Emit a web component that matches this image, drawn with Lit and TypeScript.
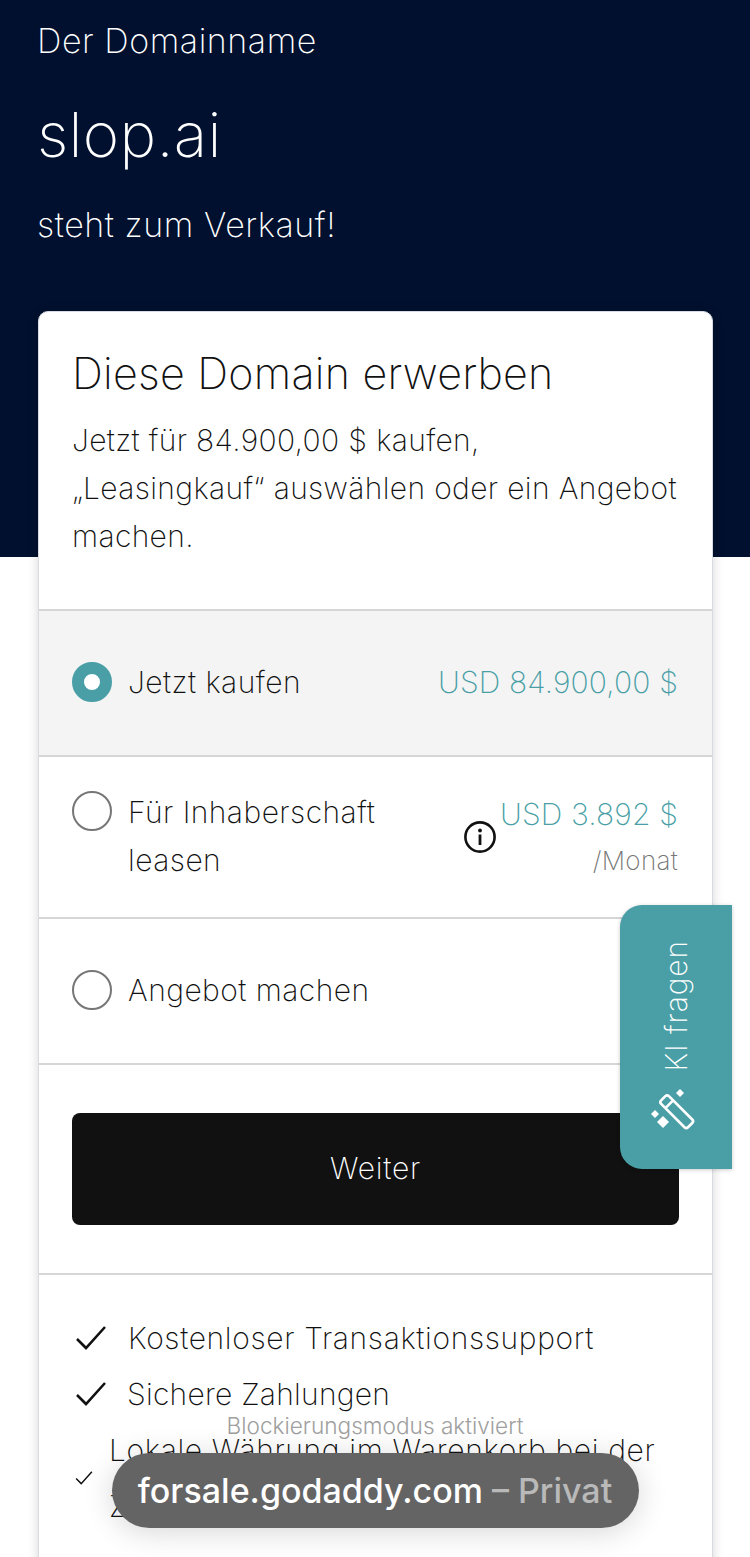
import { LitElement, css, html, svg } from 'lit'
import { customElement } from 'lit/decorators.js'

const check = (size: number) => html`
  <svg class="check" width=${size} height=${size} viewBox="0 0 32 32" fill="none" stroke="#111" stroke-width="2.6">
    <path d="M2 17 L11 26 L30 5" />
  </svg>
`

const wand = svg`
  <g fill="none" stroke="#fff" stroke-width="2.6" stroke-linejoin="round" transform="translate(24.7 21.7) rotate(-45)">
    <rect x="-5.5" y="-19" width="11" height="38" rx="2.5" />
    <path d="M-5.5 -10.5 H5.5" />
  </g>
  <g fill="#fff">
    <path d="M28 -1 L32 3 L28 7 L24 3 Z" />
    <path d="M3 20 L7 24 L3 28 L-1 24 Z" />
    <path d="M11 26 L17 32 L11 38 L5 32 Z" />
  </g>
`

@customElement('app-root')
export class AppRoot extends LitElement {
  render() {
    return html`
      <header class="hero">
        <div class="lead">Der Domainname</div>
        <h1>slop.ai</h1>
        <div class="lead sale">steht zum Verkauf!</div>
      </header>

      <main class="card">
        <section class="intro">
          <h2>Diese Domain erwerben</h2>
          <p>Jetzt für 84.900,00 $ kaufen,<br />„Leasingkauf“ auswählen oder ein Angebot machen.</p>
        </section>

        <div class="option active">
          <span class="radio on"></span>
          <span class="label">Jetzt kaufen</span>
          <span class="price">USD 84.900,00 $</span>
        </div>

        <div class="option lease">
          <span class="radio"></span>
          <span class="label">Für Inhaberschaft leasen</span>
          <svg class="info" width="34" height="34" viewBox="0 0 34 34">
            <circle cx="17" cy="17" r="14.6" fill="none" stroke="#111" stroke-width="2.6" />
            <circle cx="17" cy="10.5" r="1.9" fill="#111" />
            <rect x="15.6" y="14.5" width="2.8" height="10.5" fill="#111" />
          </svg>
          <div class="lease-price">
            <span class="price">USD 3.892 $</span>
            <span class="per">/Monat</span>
          </div>
        </div>

        <div class="option">
          <span class="radio"></span>
          <span class="label">Angebot machen</span>
        </div>

        <div class="action"><button>Weiter</button></div>

        <ul class="perks">
          <li class="wide">${check(32)}<span>Kostenloser Transaktionssupport</span></li>
          <li>${check(32)}<span>Sichere Zahlungen</span></li>
          <li class="small">${check(18)}<span>Lokale Währung im Warenkorb bei der Zahlung</span></li>
        </ul>
      </main>

      <aside class="ask">
        <span>KI fragen</span>
        <svg width="44" height="44" viewBox="0 0 44 44">${wand}</svg>
      </aside>

      <div class="browser">
        <div class="mode">Blockierungsmodus aktiviert</div>
        <div class="pill">forsale.godaddy.com<span> – Privat</span></div>
      </div>
    `
  }

  static styles = css`
    :host {
      display: block;
      position: relative;
      height: 1557px;
      overflow: hidden;
      background: #fff;
      color: #111;
      font-family: Inter, 'Noto Sans', sans-serif;
      font-weight: 200;
    }
    * {
      box-sizing: border-box;
    }
    .hero {
      height: 557px;
      padding: 19px 37px 0;
      background: #00102e;
      color: #fff;
    }
    .lead {
      font-size: 34px;
      letter-spacing: 0.55px;
      line-height: 44px;
    }
    h1 {
      margin: 36px 0 0;
      font-size: 62px;
      font-weight: 200;
      letter-spacing: 0.3px;
      line-height: 72px;
    }
    .sale {
      margin-top: 32px;
    }
    .card {
      margin: -246px 37px 0 38px;
      height: 1400px;
      background: #fff;
      border: 1px solid #d8dbe2;
      border-radius: 10px;
      box-shadow: 0 2px 12px rgba(0, 0, 0, 0.16);
    }
    .intro {
      height: 299px;
      padding: 33px 20px 0 33px;
      border-bottom: 2px solid #d6d6d6;
    }
    h2 {
      margin: 0;
      font-size: 43px;
      font-weight: 200;
      letter-spacing: 0.25px;
      line-height: 56px;
    }
    p {
      margin: 15px 0 0;
      font-size: 30px;
      letter-spacing: 0.35px;
      line-height: 48px;
    }
    .option {
      display: flex;
      align-items: center;
      gap: 16px;
      height: 146px;
      padding: 0 34px 2px 33px;
      border-bottom: 2px solid #d6d6d6;
      font-size: 30px;
    }
    .active {
      background: #f4f4f4;
    }
    .lease {
      height: 162px;
    }
    .radio {
      flex: none;
      width: 40px;
      height: 40px;
      border: 2px solid #767676;
      border-radius: 50%;
      background: #fff;
    }
    .lease .radio {
      align-self: flex-start;
      margin-top: 34px;
    }
    .radio.on {
      border: 12px solid #4a9fa6;
    }
    .label {
      letter-spacing: 0.45px;
      line-height: 48px;
    }
    .lease .label {
      width: 290px;
    }
    .price {
      margin-left: auto;
      color: #4a9fa6;
      letter-spacing: 0.15px;
    }
    .info {
      flex: none;
      margin: 2px 0 0 auto;
    }
    .lease-price {
      display: flex;
      flex-direction: column;
      align-items: flex-end;
      margin: 1px 0 0 -13px;
    }
    .lease-price .price {
      line-height: 48px;
    }
    .per {
      color: #767676;
      font-size: 26px;
      letter-spacing: 0.3px;
      line-height: 46px;
    }
    .action {
      height: 210px;
      padding: 48px 33px 0;
      border-bottom: 2px solid #d6d6d6;
    }
    button {
      display: block;
      width: 100%;
      height: 112px;
      padding: 0 0 2px;
      border: none;
      border-radius: 8px;
      background: #111;
      color: #fff;
      font: inherit;
      font-size: 30px;
      letter-spacing: 0.8px;
    }
    .perks {
      margin: 0;
      padding: 35px 33px 0 36px;
      list-style: none;
      font-size: 30px;
      letter-spacing: 0.25px;
    }
    .perks li {
      display: flex;
      align-items: center;
      gap: 20px;
      line-height: 56px;
    }
    .perks .wide {
      gap: 21px;
      letter-spacing: 0.65px;
    }
    .check {
      flex: none;
    }
    .perks .small {
      gap: 16px;
      letter-spacing: 0.65px;
    }
    .ask {
      position: absolute;
      left: 620px;
      top: 905px;
      display: flex;
      flex-direction: column;
      align-items: center;
      justify-content: flex-end;
      gap: 19px;
      width: 112px;
      height: 264px;
      padding-bottom: 35px;
      background: #4a9fa6;
      border-radius: 22px 0 0 22px;
      box-shadow: 0 1px 4px rgba(0, 0, 0, 0.2);
      color: #fff;
      font-size: 30px;
      letter-spacing: 0.9px;
    }
    .ask span {
      writing-mode: vertical-rl;
      transform: rotate(180deg);
    }
    .ask svg {
      margin-left: -4px;
      overflow: visible;
    }
    .browser {
      position: absolute;
      left: 0;
      right: 0;
      bottom: 29px;
      display: flex;
      flex-direction: column;
      align-items: center;
    }
    .mode {
      height: 24px;
      color: #a0a0a0;
      font-size: 22.6px;
      font-weight: 300;
      line-height: 24px;
    }
    .pill {
      margin-top: 15px;
      width: 527px;
      height: 75px;
      border-radius: 38px;
      background: #646464;
      box-shadow: 0 4px 30px rgba(0, 0, 0, 0.16);
      color: #fff;
      font-size: 34px;
      font-weight: 500;
      line-height: 75px;
      text-align: center;
    }
    .pill span {
      color: #b9b9b9;
    }
  `
}
